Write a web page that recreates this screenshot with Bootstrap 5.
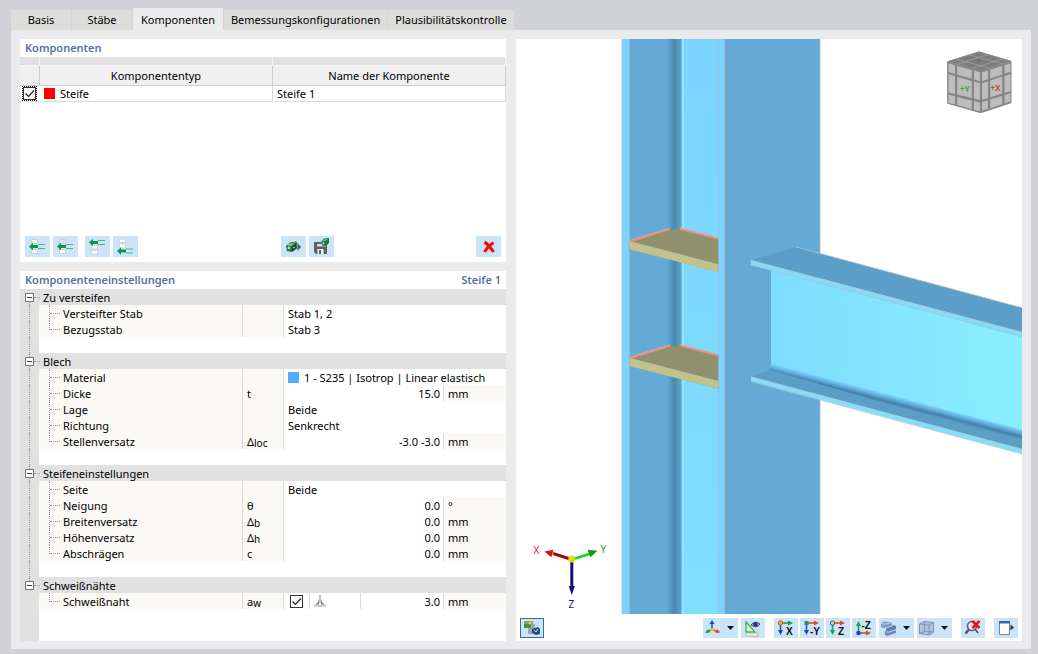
<!DOCTYPE html>
<html lang="de">
<head>
<meta charset="utf-8">
<meta name="viewport" content="width=device-width, initial-scale=1">
<title>Komponenten</title>
<link href="https://cdn.jsdelivr.net/npm/bootstrap@5.3.0/dist/css/bootstrap.min.css" rel="stylesheet">
<style>
  :root { --pane: #ebebeb; --band: #e1e1e1; --tint: #faf9f6; --tool: #cbe4f7; --heading: #5b6f9e; }
  body { background: #d1d2d6; color: #000; font: 11px/16px "Noto Sans", "Open Sans", sans-serif; padding: 8px 7px 5px 11px; }
  button { color: inherit; }
  .tabstrip .nav-link { min-width: 61px; height: 20px; padding: 0 7px; margin-top: 2px; color: #000; background: #dddddc; border: 0; border-right: 1px solid #d4d4d5; border-radius: 0; line-height: 20px; }
  .tabstrip .nav-link.active { height: 22px; margin-top: 0; padding: 2px 8px 0; background: var(--pane); color: #000; }
  .workspace { background: var(--pane); padding: 9px 9px 8px; gap: 10px; min-height: 0; }
  .side { flex: 486 1 0; gap: 9px; min-width: 0; }
  .viewer { flex: 506 1 0; min-width: 0; }
  .head-line { height: 18px; padding: 0 5px; line-height: 18px; font-size: 11px; font-weight: 600; color: var(--heading); margin: 0; }
  .list-pane { height: 223px; }
  .actions { padding: 0 5px 5px; }

  .parts { width: 100%; table-layout: fixed; border-collapse: separate; border-spacing: 0; }
  .parts th { font-weight: 400; text-align: center; background: #f0f0f0; height: 20px; padding: 1px 0 0; border: 0 solid #cdcdcd; border-width: 0 1px 1px 0; }
  .parts .strip th { height: 9px; padding: 0; background: var(--band); border-color: #f6f6f6; }
  .parts td { height: 16px; padding: 0 4px; border: 0 solid #dcdcdc; border-width: 0 1px 1px 0; line-height: 15px; }
  .parts td.tick-cell { padding: 0 2px; border-right-color: #fff; }
  .swatch { display: inline-block; width: 11px; height: 11px; margin-right: 5px; vertical-align: -1px; }

  .form-check-input.tick { width: 13px; height: 13px; margin: 0; border: 1px solid #333; border-radius: 0; display: block; float: none; }
  .form-check-input.tick:checked { background: #fff url("data:image/svg+xml,%3Csvg xmlns='http://www.w3.org/2000/svg' viewBox='0 0 11 11'%3E%3Cpath d='M1.5 5.5l3 3L10 2.5' fill='none' stroke='%23222' stroke-width='1.2'/%3E%3C/svg%3E") center/11px no-repeat; border-color: #333; }
  .focused { border: 1px dotted #000; padding: 0; width: 15px; height: 15px; display: block; }

  .tool { width: 25px; height: 21px; padding: 0; border: 0; border-radius: 0; background: var(--tool); display: flex; align-items: center; justify-content: center; }
  .tool:hover { background: #b3d8f3; }
  .tool svg { display: block; }
  .view-bar { height: 27px; padding: 4px 4px 3px; }
  .view-bar .tool { width: 24px; height: 20px; }
  .view-bar .tool.wide { width: 35px; }
  .view-bar .tool.pressed { border: 1px solid #2f71a3; }
  .groups { gap: 9px; } .near { gap: 3px; } .close-by { gap: 2px; } .pairs { gap: 7px; }

  .props-body { background: linear-gradient(90deg, var(--band) 19px, #fff 19px); }
  .props { width: 100%; table-layout: fixed; border-collapse: separate; border-spacing: 0; }
  .props td, .props th { height: 16px; padding: 2px 0 0; line-height: 14px; font-weight: 400; white-space: nowrap; position: relative; }
  .props .grp th { background: var(--band); padding-left: 4px; }
  .props .name { background: var(--tint); padding-left: 24px; border-right: 1px solid #dadada; }
  .props .name::before { content: ""; position: absolute; left: 10px; top: 0; width: 1px; height: 16px; border-left: 1px dotted #999; }
  .props .name::after { content: ""; position: absolute; left: 11px; top: 8px; width: 10px; border-top: 1px dotted #999; }
  .props .last .name::before { height: 9px; }
  .props .sym { background: var(--tint); padding-left: 4px; border-right: 1px solid #dadada; }
  .props .sym small { font-size: 10px; vertical-align: -1px; line-height: 1; }
  .props .val { padding-left: 4px; }
  .props .num { text-align: right; padding-right: 3px; }
  .props .unit { background: var(--tint); border-left: 1px solid #dadada; padding-left: 4px; }
  .props .split { border-right: 1px solid #dadada; padding-top: 0; }
  .props .pick { padding-left: 6px; }
  .props .rail { padding-top: 0; }
  .props .rail::before { content: ""; position: absolute; left: 9px; top: 0; height: 100%; border-left: 1px dotted #999; }
  .props tr:first-child .rail::before { top: 8px; height: 8px; }
  .props .end .rail::before { height: 8px; }
  .props .past .rail::before { display: none; }
  .props .grp .rail::after { content: ""; position: absolute; left: 14px; top: 8px; width: 6px; border-top: 1px dotted #999; z-index: 1; }
  .fold { position: relative; display: block; width: 9px; height: 9px; margin-left: 5px; padding: 0; background: linear-gradient(#444,#444) center/5px 1px no-repeat #fff; border: 1px solid #777; }
  .scene { flex: 1 1 0; min-height: 0; width: 100%; display: block; }
</style>
</head>
<body class="vh-100 d-flex flex-column overflow-hidden">

<nav class="tabstrip nav align-items-start" aria-label="Register">
  <button class="nav-link" type="button">Basis</button>
  <button class="nav-link" type="button">Stäbe</button>
  <button class="nav-link active" type="button" aria-current="page">Komponenten</button>
  <button class="nav-link" type="button">Bemessungskonfigurationen</button>
  <button class="nav-link" type="button">Plausibilitätskontrolle</button>
</nav>

<main class="workspace d-flex flex-grow-1">
  <div class="side d-flex flex-column">
    <section class="list-pane bg-white d-flex flex-column">
      <h2 class="head-line">Komponenten</h2>
      <table class="parts">
        <colgroup><col style="width:20px"><col><col></colgroup>
        <thead>
          <tr class="strip"><th></th><th></th><th></th></tr>
          <tr><th></th><th scope="col">Komponententyp</th><th scope="col">Name der Komponente</th></tr>
        </thead>
        <tbody>
          <tr>
            <td class="tick-cell"><span class="focused"><input class="form-check-input tick" type="checkbox" checked aria-label="Steife aktiv"></span></td>
            <td><span class="swatch" style="background:#f00"></span>Steife</td>
            <td>Steife 1</td>
          </tr>
        </tbody>
      </table>
      <div class="actions d-flex justify-content-between mt-auto">
        <div class="d-flex pairs">
          <div class="d-flex near">
            <button class="tool" type="button" aria-label="Davor einfügen"><svg width="19" height="17" viewBox="0 0 19 17"><g fill="#f4f4f4" stroke="#cfcfd6"><path d="M3.500 1.500h6v4h-6zM3.500 11.500h6v4h-6z"/></g><path d="M10 6.500h7M10 10.500h7" stroke="#4db58a"/><path d="M1 8.500L5 4.700v2.400h5v3H5v2.300z" fill="#0a9850"/></svg></button>
            <button class="tool" type="button" aria-label="Danach einfügen"><svg width="19" height="17" viewBox="0 0 19 17"><g fill="#e4e2ee" stroke="#cfcfd6"><path d="M3.500 1.500h6v4h-6z"/><path fill="#fff" d="M3.500 11.500h6v4h-6z"/></g><path d="M10 6.500h7M10 10.500h7" stroke="#4db58a"/><path d="M1 8.500L5 4.700v2.400h5v3H5v2.300z" fill="#0a9850"/></svg></button>
          </div>
          <div class="d-flex near">
            <button class="tool" type="button" aria-label="Nach oben"><svg width="19" height="17" viewBox="0 0 19 17"><g fill="#fff" stroke="#cfcfd6"><path d="M3.500 7h6v4h-6zM3.500 12.500h6v3.500h-6z"/></g><path d="M10 2.500h7M10 6.500h7" stroke="#4db58a"/><path d="M1 4.500L5 .7v2.400h5v3H5v2.300z" fill="#0a9850"/></svg></button>
            <button class="tool" type="button" aria-label="Nach unten"><svg width="19" height="17" viewBox="0 0 19 17"><g fill="#fff" stroke="#cfcfd6"><path d="M3.500 1h6v3.500h-6zM3.500 6h6v4h-6z"/></g><path d="M10 11h7M10 15h7" stroke="#4db58a"/><path d="M1 13L5 9.200v2.400h5v3H5v2.300z" fill="#0a9850"/></svg></button>
          </div>
        </div>
        <div class="d-flex near">
          <button class="tool" type="button" aria-label="Aus Bibliothek laden"><svg width="17" height="15" viewBox="0 0 17 15"><path d="M1 7l4-3.500 6-1 1 1v6L7 13l-5-1z" fill="#23703c"/><path d="M2 7l4-3 5-1-4 4z" fill="#64b072"/><path d="M7 7.500L11 4v5l-4 3.500z" fill="#14502a"/><circle cx="4" cy="9" r="1.400" fill="#a9d9ae"/><path d="M3 5l3 1M8 9l2-1" stroke="#b8e0bb"/><path d="M12.500 4v8l3.500-4z" fill="#555"/></svg></button>
          <button class="tool" type="button" aria-label="In Bibliothek speichern"><svg width="19" height="19" viewBox="0 0 19 19"><path d="M2 5h7v2H5v2.500h9V7l1-.5V17H4l-2-2z" fill="#5d5f63"/><path d="M5.500 12h6v5h-6z" fill="#eef3f6"/><path d="M7 13h2v4H7z" fill="#5d5f63"/><path d="M9 5l3-3.500L17 1v5l-3 3-4-.5z" fill="#23743d"/><path d="M10 4.500L13 2l3-.3L13.500 4z" fill="#72bd80"/><circle cx="11.500" cy="6.300" r="1.100" fill="#b5dfb9"/></svg></button>
        </div>
        <button class="tool" type="button" aria-label="Löschen"><svg width="14" height="14" viewBox="0 0 14 14"><path d="M2.500 2Q7 5 11.500 12M11.500 2.500Q6 6 2.500 12" fill="none" stroke="#fa0505" stroke-width="3"/></svg></button>
      </div>
    </section>

    <section class="bg-white d-flex flex-column flex-grow-1">
      <div class="d-flex justify-content-between">
        <h2 class="head-line">Komponenteneinstellungen</h2><span class="head-line">Steife 1</span>
      </div>
      <div class="props-body flex-grow-1">
      <table class="props">
        <colgroup><col style="width:19px"><col style="width:204px"><col style="width:41px"><col style="width:26px"><col style="width:51px"><col><col style="width:63px"></colgroup>
        <tbody>
          <tr class="grp"><td class="rail"><button class="fold" type="button" aria-label="Zu versteifen einklappen"></button></td><th colspan="6">Zu versteifen</th></tr>
          <tr><td class="rail"></td><td class="name">Versteifter Stab</td><td class="sym"></td><td class="val" colspan="4">Stab 1, 2</td></tr>
          <tr class="last"><td class="rail"></td><td class="name">Bezugsstab</td><td class="sym"></td><td class="val" colspan="4">Stab 3</td></tr>
          <tr><td class="rail"></td><td colspan="6"></td></tr>
          <tr class="grp"><td class="rail"><button class="fold" type="button" aria-label="Blech einklappen"></button></td><th colspan="6">Blech</th></tr>
          <tr><td class="rail"></td><td class="name">Material</td><td class="sym"></td><td class="val" colspan="4"><span class="swatch" style="background:#55aaff"></span>1 - S235 | Isotrop | Linear elastisch</td></tr>
          <tr><td class="rail"></td><td class="name">Dicke</td><td class="sym">t</td><td class="num" colspan="3">15.0</td><td class="unit">mm</td></tr>
          <tr><td class="rail"></td><td class="name">Lage</td><td class="sym"></td><td class="val" colspan="4">Beide</td></tr>
          <tr><td class="rail"></td><td class="name">Richtung</td><td class="sym"></td><td class="val" colspan="4">Senkrecht</td></tr>
          <tr class="last"><td class="rail"></td><td class="name">Stellenversatz</td><td class="sym">Δ<small>loc</small></td><td class="num" colspan="3">-3.0 -3.0</td><td class="unit">mm</td></tr>
          <tr><td class="rail"></td><td colspan="6"></td></tr>
          <tr class="grp"><td class="rail"><button class="fold" type="button" aria-label="Steifeneinstellungen einklappen"></button></td><th colspan="6">Steifeneinstellungen</th></tr>
          <tr><td class="rail"></td><td class="name">Seite</td><td class="sym"></td><td class="val" colspan="4">Beide</td></tr>
          <tr><td class="rail"></td><td class="name">Neigung</td><td class="sym">θ</td><td class="num" colspan="3">0.0</td><td class="unit">°</td></tr>
          <tr><td class="rail"></td><td class="name">Breitenversatz</td><td class="sym">Δ<small>b</small></td><td class="num" colspan="3">0.0</td><td class="unit">mm</td></tr>
          <tr><td class="rail"></td><td class="name">Höhenversatz</td><td class="sym">Δ<small>h</small></td><td class="num" colspan="3">0.0</td><td class="unit">mm</td></tr>
          <tr class="last"><td class="rail"></td><td class="name">Abschrägen</td><td class="sym">c</td><td class="num" colspan="3">0.0</td><td class="unit">mm</td></tr>
          <tr><td class="rail"></td><td colspan="6"></td></tr>
          <tr class="grp end"><td class="rail"><button class="fold" type="button" aria-label="Schweißnähte einklappen"></button></td><th colspan="6">Schweißnähte</th></tr>
          <tr class="last past"><td class="rail"></td><td class="name"><label for="weld">Schweißnaht</label></td><td class="sym">a<small>w</small></td><td class="split pick"><input class="form-check-input tick" id="weld" type="checkbox" checked></td><td class="split val"><svg class="d-block" width="12" height="12" viewBox="0 0 12 12"><path d="M5 0h2v8H5z" fill="#a9c8e6"/><path d="M0 9.500h12V12H0z" fill="#b9d3ee"/><path d="M5 4v5.500H1Q4.500 8 5 4zM7 4v5.500h4Q7.500 8 7 4z" fill="#c66f0c"/></svg></td><td class="num">3.0</td><td class="unit">mm</td></tr>
        </tbody>
      </table>
      </div>
    </section>
  </div>

  <section class="viewer bg-white d-flex flex-column" aria-label="3D-Ansicht">
    <svg class="scene" viewBox="516 39 506 575" preserveAspectRatio="xMaxYMin slice" font-family="Noto Sans, sans-serif">
      <defs>
        <linearGradient id="root"><stop offset="0" stop-color="#63aad6"/><stop offset=".5" stop-color="#4a88ae"/><stop offset="1" stop-color="#62a8d3"/></linearGradient>
        <linearGradient id="web"><stop offset="0" stop-color="#7fdcff"/><stop offset="1" stop-color="#89efff"/></linearGradient>
        <linearGradient id="inner" x1="0" y1="0" x2="0" y2="1"><stop offset="0" stop-color="#7bd3ff"/><stop offset="1" stop-color="#81deff"/></linearGradient>
        <linearGradient id="fillet" gradientUnits="userSpaceOnUse" x1="771" y1="364" x2="768.500" y2="373.500"><stop offset="0" stop-color="#7ccfff"/><stop offset=".35" stop-color="#60aadb"/><stop offset=".68" stop-color="#4580a6"/><stop offset="1" stop-color="#5b9fc9"/></linearGradient>
        <g id="plate">
          <path d="M629.300 241.500L670 228l2 1.500h5.500L680 228l38.300 10v34L629.300 249z" fill="#8f906c"/>
          <path d="M629.300 241.500l89 23.200V272l-89-22.700z" fill="#c3c389"/>
          <path d="M629.300 241.500l89 23.200" stroke="#b9c0b4" fill="none"/>
          <path d="M629.500 240.300L670 227.800v2.200L632 242zM680 227.600l38.300 9.900v2.300L680 229.900z" fill="#e5907a"/>
          <path d="M629.500 240.500L670 228M680 228l38.300 10" stroke="#dcae9e" stroke-width=".7" fill="none"/>
        </g>
      </defs>
      <path fill="#7ad4ff" d="M622 39h7.500v576H622zM718 39h7v576h-7z"/>
      <path fill="#63aad6" d="M629.300 39H669v576h-39.700zM725 39h95v576h-95z"/>
      <path fill="url(#root)" d="M667 39h15v576h-15z"/>
      <path fill="#8ce9ff" d="M681.700 39h2.500v576h-2.500z"/>
      <path fill="url(#inner)" d="M684 39h34.300v576H684z"/>
      <path d="M622 39v576M629 39v576M718.300 39v576M820 39v576" stroke="#9fc0d2" stroke-width=".8"/>
      <path d="M724.800 39v576" stroke="#a9a9a9"/>
      <use href="#plate"/><use href="#plate" y="116.700"/>
      <path fill="url(#web)" d="M771 268l252 66v98L771 366z"/>
      <path fill="url(#fillet)" d="M771 363.500l252 66.500v12L768 373z"/>
      <path fill="#5b9fc9" d="M751 376.700l18-6.500 2-.5 252 69v11z"/>
      <path fill="url(#fillet)" d="M769 369.500l2-5 252 66v13z"/>
      <path fill="#7ee0fc" d="M751 376.700l272 72.800v4.500L751 381z"/>
      <path d="M751 376.700l272 72.800M751 381.500l272 72.800" stroke="#b9c4ca" stroke-width=".8" fill="none"/>
      <path fill="#5b9fc9" d="M751 260l45-13 227 61v24.500z"/>
      <path fill="#7fddff" d="M751 260l272 72.500v4.500L751 265z"/>
      <path d="M751 260.300L1023 332.500M771 270l252 67M796 247l227 61M751 260v5l20 5" stroke="#b5bec4" stroke-width=".8" fill="none"/>

      <g stroke-linejoin="round">
        <path d="M979 52l-31.300 9.700v41.600l33 9.400 30.300-10V61.300z" fill="#858585" stroke="#858585"/>
        <path d="M979 52l-31.300 9.700 33 9 30.300-9.400z" fill="#7d7d7d" stroke="#8d8d8d"/>
        <g fill="#bdbdbd">
          <path d="M948.500 63.500l6.500 1.800v8.700l-6.500-1.900zM957.200 66l14.600 4v8.800l-14.600-4.200zM974 70.600l6 1.700v8.900l-6-1.800zM948.500 74.200l6.500 1.900v18l-6.500-1.700zM957.200 76.700l14.600 4.200v17.200l-14.600-3.500zM974 81.500l6 1.800v16.800l-6-1.500zM948.500 94.600l6.500 1.700v8.300l-6.500-1.800zM957.200 96.900l14.600 3.500v8.800l-14.600-4.100zM974 101l6 1.500v9l-6-1.700z"/>
          <path d="M982 72.300l6-1.900v8.700l-6 2zM990.200 69.700l12-3.700v8.500l-12 4zM1004.500 65.300l6-1.900v8.400l-6 2zM982 83.300l6-2v16.700l-6 1.900zM990.200 80.600l12-4v17l-12 3.700zM1004.500 75.900l6-2v17.300l-6 1.800zM982 102l6-1.700v8.400l-6 2zM990.200 99.600l12-3.700v8.300l-12 4zM1004.500 95.200l6-1.900v8.200l-6 2z"/>
        </g>
        <path d="M956 59.200l33 8.800M969.500 55l33.500 9M957 64.500l31-10M972 68.500l31-9.800" stroke="#a5a5a5" stroke-width=".7"/>
        <path d="M974 61l5-1.300 5 1.300-5 1.500z" fill="#6d7288"/>
        <text x="960" y="91.500" font-size="8" font-weight="700" fill="#35ab45">+Y</text>
        <text x="990.500" y="91" font-size="8" font-weight="700" fill="#c6484d">+X</text>
      </g>

      <path d="M571.800 559.500L553 553.500" stroke="#a30d0d" stroke-width="3"/><path d="M544.500 551.500l9-1.800-2.200 7.500z" fill="#e20f12"/>
      <path d="M571.800 559.500L590 553.700" stroke="#13d813" stroke-width="2.500"/><path d="M597.500 550.800l-10-1 3 7.500z" fill="#0d9a19"/>
      <path d="M571.800 560v28" stroke="#12127c" stroke-width="3"/><path d="M568.700 586h6.200l-3.100 9z" fill="#12127c"/>
      <circle cx="571.800" cy="559" r="3.500" fill="#dede0c"/>
      <text x="533.500" y="553.500" font-size="10" fill="#e3161b">X</text>
      <text x="600.500" y="552.500" font-size="10" fill="#0ba51c">Y</text>
      <text x="568.500" y="608" font-size="10" fill="#1b1b80">Z</text>
    </svg>

    <div class="view-bar d-flex justify-content-between">
      <button class="tool pressed" type="button" aria-label="Grafikeinstellungen"><svg width="18" height="16" viewBox="0 0 18 16"><path d="M1 1h9v7H1z" fill="#4d8f3a"/><path d="M1 1h9v3H1z" fill="#8aa95a"/><circle cx="7" cy="3" r="1.500" fill="#e8cf3d"/><path d="M8 4h4v10H5V8h3z" fill="#9da7b0"/><path d="M9 9l6-2 2 2v5l-4 1-4-2z" fill="#23507f"/><path d="M11 10l2 2 2-3" stroke="#cfe0f0" fill="none"/></svg></button>
      <div class="d-flex groups">
        <div class="d-flex near">
          <button class="tool wide" type="button" aria-label="Achsensystem"><svg width="33" height="18" viewBox="0 0 33 18"><path d="M8 10V4" stroke="#1747d6" stroke-width="1.400"/><path d="M8 1l2.500 4h-5z" fill="#1747d6"/><path d="M8 10.500l-4 2" stroke="#12a04b" stroke-width="1.500"/><path d="M1 14l3-4 2 3.500z" fill="#12a04b"/><path d="M8 10.500l5 2" stroke="#e8481c" stroke-width="1.500"/><path d="M16.500 13.500l-5 .5 1.500-4z" fill="#e8481c"/><circle cx="8" cy="10.500" r="1.800" fill="#f4c313"/><path d="M23 7h7l-3.500 4z" fill="#111"/></svg></button>
          <button class="tool" type="button" aria-label="Messen"><svg width="18" height="17" viewBox="0 0 18 17"><path d="M2 2l9 10H2z" fill="#d8f5d6" stroke="#3bb54a" stroke-width="1.300"/><path d="M2 13h12v3H2z" fill="#eee" stroke="#aaa" stroke-width=".7"/><path d="M7 5q4-5 9-1-3 5-9 1z" fill="#c9cbe8" stroke="#3b4380"/><circle cx="11.500" cy="4.300" r="2.200" fill="#2c336e"/></svg></button>
        </div>
        <div class="d-flex near">
          <div class="d-flex close-by">
            <button class="tool" type="button" aria-label="Ansicht in X"><svg width="18" height="18" viewBox="0 0 18 18"><path d="M3.500 4v8" stroke="#2757d9" stroke-width="1.600"/><path d="M4 4h8" stroke="#17a053" stroke-width="1.600"/><path d="M1 11h5l-2.500 5z" fill="#1946ce"/><path d="M11 1.500v5L16 4z" fill="#17a053"/><circle cx="3.500" cy="4" r="2.200" fill="#f6b31a" stroke="#d9481d"/><text x="9" y="16" font-size="10" font-weight="700" fill="#111" font-family="Liberation Sans, sans-serif">X</text></svg></button>
            <button class="tool" type="button" aria-label="Ansicht gegen Y"><svg width="18" height="18" viewBox="0 0 18 18"><path d="M3.500 4v8" stroke="#2757d9" stroke-width="1.600"/><path d="M4 4h8" stroke="#e8481c" stroke-width="1.600"/><path d="M1 11h5l-2.500 5z" fill="#1946ce"/><path d="M11 1.500v5L16 4z" fill="#e8481c"/><path d="M1.500 2h4v4h-4z" fill="#17a053"/><text x="7" y="16" font-size="10" font-weight="700" fill="#111" font-family="Liberation Sans, sans-serif">-Y</text></svg></button>
            <button class="tool" type="button" aria-label="Ansicht in Z"><svg width="18" height="18" viewBox="0 0 18 18"><path d="M3.500 4v8" stroke="#17a053" stroke-width="1.600"/><path d="M4 4h8" stroke="#e8481c" stroke-width="1.600"/><path d="M1 11h5l-2.500 5z" fill="#17a053"/><path d="M11 1.500v5L16 4z" fill="#e8481c"/><circle cx="3.500" cy="4" r="2.200" fill="#f6d45a" stroke="#2757d9"/><text x="9" y="16" font-size="10" font-weight="700" fill="#111" font-family="Liberation Sans, sans-serif">Z</text></svg></button>
            <button class="tool" type="button" aria-label="Ansicht gegen Z"><svg width="18" height="18" viewBox="0 0 18 18"><path d="M3.500 14V6" stroke="#17a053" stroke-width="1.600"/><path d="M4 14h8" stroke="#e8481c" stroke-width="1.600"/><path d="M1 7h5L3.500 2z" fill="#17a053"/><path d="M11 11.500v5l5-2.500z" fill="#e8481c"/><circle cx="3.500" cy="14" r="2.300" fill="#1946ce"/><text x="6.500" y="10" font-size="10" font-weight="700" fill="#111" font-family="Liberation Sans, sans-serif">-Z</text></svg></button>
          </div>
          <button class="tool wide" type="button" aria-label="Ansichten"><svg width="33" height="18" viewBox="0 0 33 18"><path d="M1 4l3-1.500 8 1V7l-8 2-3-.8z" fill="#7f9bc4"/><path d="M6 8.500l7-2.500 3 .8V10l-9 3-1-.8z" fill="#5c7db0"/><path d="M5 12l9-2 2 1v3l-9 3-2-1z" fill="#6c8bbb"/><path d="M1 4.500l4 .7 7-1.600M6 12.500l2 .8 8-2.500M5 9.500l8-3" stroke="#c9d8ee" fill="none" stroke-width=".9"/><path d="M23 7h7l-3.500 4z" fill="#111"/></svg></button>
          <button class="tool wide" type="button" aria-label="Darstellung"><svg width="33" height="18" viewBox="0 0 33 18"><path d="M1.500 5l5-2.500 9 1V13l-4 3-10-1.500z" fill="#b4c3dc" stroke="#7e92b5"/><path d="M1.500 5l9.500 1.200 4.500-2.700M11 6.200V16M6.500 2.500v10l9 .5M6.500 12.500l-5 2" fill="none" stroke="#7e92b5"/><path d="M23 7h7l-3.500 4z" fill="#111"/></svg></button>
        </div>
        <button class="tool" type="button" aria-label="Zoom zurücksetzen"><svg width="18" height="18" viewBox="0 0 18 18"><circle cx="8" cy="7" r="4.500" fill="#dce8f0" stroke="#5f6468" stroke-width="1.600"/><path d="M5 10.500l-3.500 4" stroke="#4d5256" stroke-width="2.400"/><path d="M11 10l3 4" stroke="#4d5256" stroke-width="1.500"/><path d="M8.500 2l7 7M15.500 2l-7 7" stroke="#f0101a" stroke-width="2.600"/></svg></button>
        <button class="tool" type="button" aria-label="Neues Fenster"><svg width="18" height="18" viewBox="0 0 18 18"><path d="M2.500 2.500h10v13h-10z" fill="#fdfdfd" stroke="#7c8694"/><path d="M2 2h11v2.500H2z" fill="#3568b0"/><path d="M13.500 5.500v6l3.500-3z" fill="#333"/></svg></button>
      </div>
    </div>
  </section>
</main>
<script src="https://cdn.jsdelivr.net/npm/bootstrap@5.3.0/dist/js/bootstrap.bundle.min.js"></script>
</body>
</html>
